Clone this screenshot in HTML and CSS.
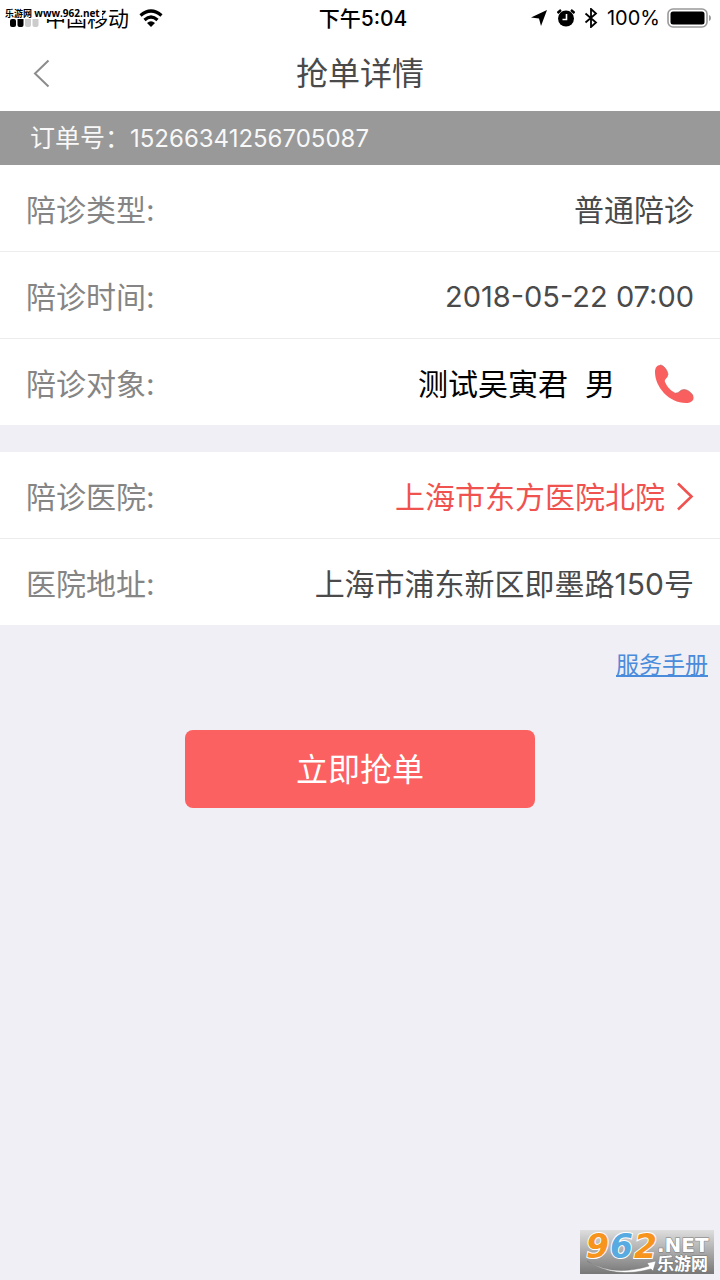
FILE: index.html
```
<!DOCTYPE html>
<html lang="zh-CN">
<head>
<meta charset="utf-8">
<meta name="viewport" content="width=device-width, initial-scale=1">
<title>抢单详情</title>
<link rel="stylesheet" href="styles.css">
</head>
<body>
<div class="page">
  <div class="status">
    <div class="status-left">
      <svg class="signal" width="30" height="14" viewBox="0 0 30 14" aria-hidden="true">
        <rect x="0" y="6" width="6" height="8" rx="2"/><rect x="7.500" y="4" width="6" height="10" rx="2"/>
        <g fill="#cccccc"><rect x="15" y="2" width="6" height="12" rx="2"/><rect x="22.500" y="0" width="6" height="14" rx="2"/></g>
      </svg>
      <span class="carrier">中国移动</span>
      <svg width="24" height="18" viewBox="0 0 24 18" fill="none" stroke="#000" stroke-width="3.200" aria-hidden="true">
        <path d="M1.500 6.500Q12-2.500 22.500 6.500M5.500 11Q12 5 18.500 11"/>
        <path d="M8 14Q12 10.500 16 14L12 18Z" fill="#000" stroke="none"/>
      </svg>
    </div>
    <div class="clock">下午5:04</div>
    <div class="status-right">
      <svg width="18" height="18" viewBox="0 0 18 18" aria-hidden="true"><path d="M17 1L11 17L9 9.500L1 8.500Z"/></svg>
      <svg width="18" height="18" viewBox="0 0 18 18" aria-hidden="true">
        <circle cx="9" cy="9.500" r="8"/><path d="M0.500 4L4 1M17.500 4L14 1" stroke="#000" stroke-width="2.400"/><path d="M9.500 5V10.500H5.500" fill="none" stroke="#fff" stroke-width="1.600"/>
      </svg>
      <svg width="14" height="20" viewBox="0 0 14 20" fill="none" stroke="#000" stroke-width="1.800" aria-hidden="true"><path d="M1.500 5.500L12 14.500L7 19V1L12 5.500L1.500 14.500"/></svg>
      <span class="percent">100%</span>
      <svg width="45" height="20" viewBox="0 0 45 20" aria-hidden="true">
        <rect x="1" y="1" width="39" height="18" rx="5" fill="#fff" stroke="#999" stroke-width="1.600"/><rect x="3.500" y="3.500" width="34" height="13" rx="2.500"/><path d="M42 7Q44 7.500 44 10T42 13Z" fill="#999"/>
      </svg>
    </div>
    <div class="source-tag">乐游网 <span class="source-url">www.962.net</span></div>
  </div>
  <header class="nav">
    <button class="back" type="button" aria-label="返回">
      <svg width="18" height="30" viewBox="0 0 18 30" fill="none" stroke="#8c8c8c" stroke-width="2"><path d="M16.500 1.500L3 14.500L16.500 27.500"/></svg>
    </button>
    <h1 class="title">抢单详情</h1>
  </header>
  <div class="order">订单号：<span class="order-id">15266341256705087</span></div>
  <main>
    <dl class="group">
      <div class="row"><dt>陪诊类型:</dt><dd>普通陪诊</dd></div>
      <div class="row"><dt>陪诊时间:</dt><dd class="time">2018-05-22 07:00</dd></div>
      <div class="row"><dt>陪诊对象:</dt><dd class="person"><span>测试吴寅君</span><span>男</span>
        <button class="call" type="button" aria-label="拨打电话"><svg width="40" height="40" viewBox="0 0 40 40"><path d="M1 8C1 4 3 1 6 1C10 1 14 7 14 11C14 14 10 15 11 18C13 23 18 28 22 29C25 29.500 26 25.500 30 25.500C34 25.500 39 30 39.500 33C40 37 36 39 32 39C15 39 1 23 1 8Z" fill="#fa5f5f"/><path d="M6 1C10 1 14 7 14 11M22 29C25 29.500 26 25.500 30 25.500C34 25.500 38 29 39 32" fill="none" stroke="#a66" stroke-opacity=".6"/></svg></button></dd></div>
    </dl>
    <dl class="group">
      <div class="row"><dt>陪诊医院:</dt><dd><a class="hospital" href="#hospital">上海市东方医院北院<svg width="18" height="30" viewBox="0 0 18 30" fill="none" stroke="#f0524f" stroke-width="2.600" aria-hidden="true"><path d="M2 1.500L15.500 14.500L2 27.500"/></svg></a></dd></div>
      <div class="row"><dt>医院地址:</dt><dd>上海市浦东新区即墨路150号</dd></div>
    </dl>
    <div class="manual"><a href="#manual">服务手册</a></div>
    <button class="grab" type="button">立即抢单</button>
  </main>
  <svg class="badge" width="134" height="44" viewBox="0 0 134 44" role="img" aria-label="962.NET 乐游网">
    <defs><linearGradient id="silver" x2="0" y2="1"><stop stop-color="#dedede"/><stop offset="1" stop-color="#777777"/></linearGradient></defs>
    <rect width="134" height="44" fill="url(#silver)"/>
    <path d="M7 31Q33 47 69 36L67 33L76 31L73 41L71 39Q34 49 7 31Z" fill="#fff" stroke="#777" stroke-width="0.500"/>
    <g class="badge-number"><text x="6" y="28" fill="#f7941d">9</text><text x="30" y="28" fill="#58abe0">6</text><text x="54" y="28" fill="#f7941d">2</text></g>
    <text class="badge-net" x="77" y="22">.NET</text>
    <text class="badge-name" x="77" y="40">乐游网</text>
  </svg>
</div>
</body>
</html>
```
FILE: styles.css
```
* { box-sizing: border-box; }
body {
  margin: 0;
  background: #efeff5;
  color: #4a4a4a;
  font-family: Inter, "Noto Sans CJK SC", sans-serif;
}
svg { display: block; flex: none; }
button { padding: 0; border: 0; background: none; font: inherit; cursor: pointer; }
.page { position: relative; min-height: 100vh; }
.status {
  position: relative;
  display: grid;
  grid-template-columns: 1fr auto 1fr;
  align-items: center;
  height: 36px;
  padding: 0 8px 0 10px;
  background: #fff;
  color: #000;
  font-size: 21px;
  line-height: 36px;
}
.status-left, .status-right { display: flex; align-items: center; }
.status-left { gap: 5px; }
.signal { margin-top: 4px; }
.carrier { margin-right: 5px; padding-top: 2px; line-height: 34px; }
.clock { padding: 2px 0 0 4px; font-weight: 500; line-height: 34px; }
.status-right { justify-content: flex-end; gap: 9px; }
.percent { margin-right: -2px; font-size: 20px; }
.source-tag {
  position: absolute;
  left: 0;
  top: 8px;
  padding: 0 2px 0 5px;
  background: #fff;
  font: bold 9px/11px "Open Sans", "Noto Sans CJK SC", sans-serif;
}
.source-url { font-size: 10px; }
.nav {
  display: grid;
  grid-template-columns: 1fr auto 1fr;
  align-items: center;
  height: 75px;
  padding: 0 32px;
  background: #fff;
}
.back { justify-self: start; }
.title { margin: 0; font-size: 32px; font-weight: 400; line-height: 44px; }
.order {
  padding: 1px 30px 0;
  background: #999;
  color: #f8f8f8;
  font-size: 25px;
  line-height: 53px;
}
.order-id { font-size: 24px; }
.group { margin: 0 0 27px; background: #fff; }
.row {
  display: flex;
  align-items: center;
  justify-content: space-between;
  min-height: 86px;
  padding: 3px 26px 0;
  font-size: 30px;
  line-height: 44px;
}
.row + .row { border-top: 1px solid #ededed; min-height: 87px; }
dt { color: #858585; }
dd { margin: 0; }
.time { font-size: 29px; }
.person { display: flex; align-items: center; gap: 17px; color: #000; }
.call { margin-left: 22px; }
.hospital { display: flex; align-items: center; gap: 11px; color: #f0524f; text-decoration: none; }
.manual { padding: 0 12px; text-align: right; font-size: 23px; line-height: 26px; }
.manual a { color: #4a8bdb; text-underline-offset: 2px; text-decoration-thickness: 2px; }
.grab {
  display: block;
  width: 350px;
  max-width: 90%;
  margin: 52px auto 0;
  padding-top: 2px;
  border-radius: 8px;
  background: #fc6161;
  color: #fff;
  font-size: 32px;
  line-height: 76px;
}
.badge { position: absolute; right: 6px; bottom: 6px; overflow: visible; }
.badge-number {
  font: italic bold 33px "DejaVu Sans", sans-serif;
  stroke: #fff;
  stroke-width: 2px;
  paint-order: stroke;
}
.badge-net, .badge-name { fill: #fff; stroke: #777; stroke-width: 1px; paint-order: stroke; }
.badge-net { font: bold 20px "DejaVu Sans", sans-serif; }
.badge-name { font: bold 17px "Noto Sans CJK SC", sans-serif; }
```
